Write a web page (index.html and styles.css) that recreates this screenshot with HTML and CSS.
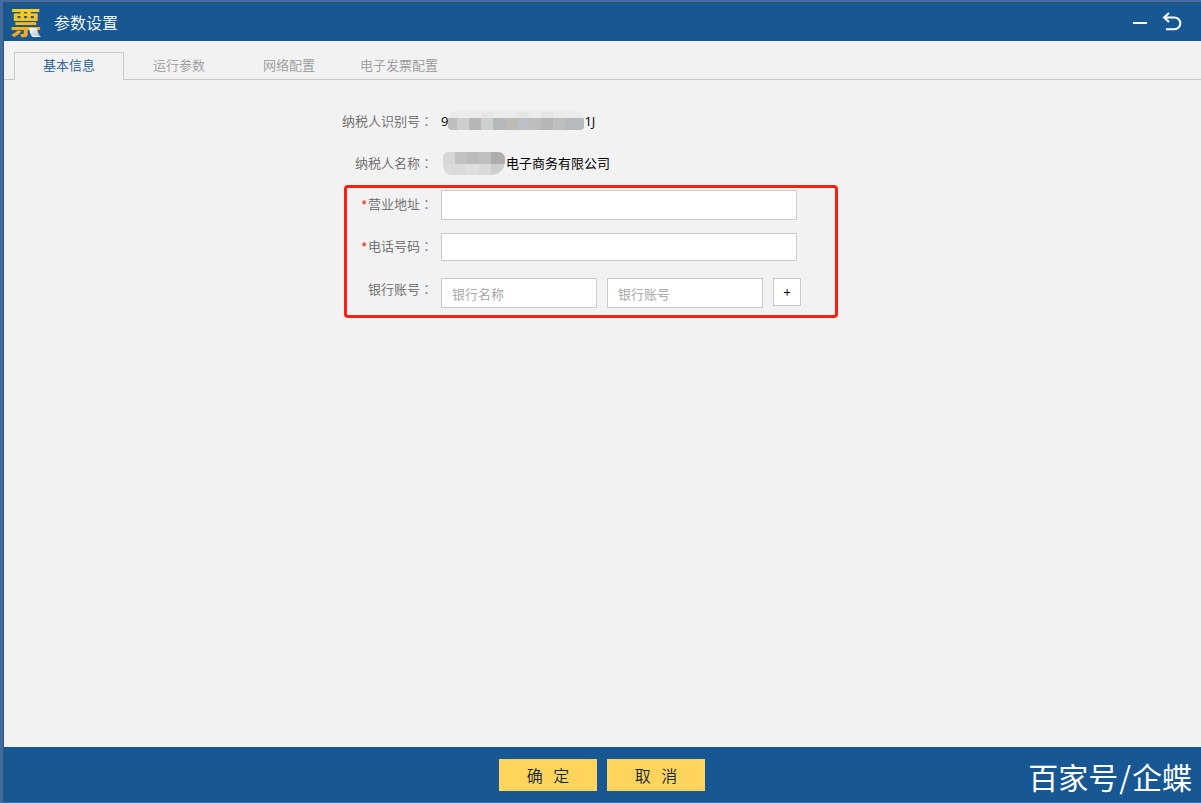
FILE: index.html
```html
<!DOCTYPE html>
<html lang="zh-CN">
<head>
<meta charset="utf-8">
<title>参数设置</title>
<link rel="stylesheet" href="styles.css">
</head>
<body>
<div class="window">
  <header class="titlebar">
    <svg class="logo" width="32" height="34" viewBox="0 0 32 34" aria-hidden="true">
      <defs>
        <linearGradient id="gold" x1="0" y1="0" x2="0" y2="1">
          <stop offset="0" stop-color="#ffdc1c"/>
          <stop offset="0.5" stop-color="#fdc21c"/>
          <stop offset="1" stop-color="#f49a14"/>
        </linearGradient>
        <linearGradient id="paper" x1="0" y1="0" x2="1" y2="1">
          <stop offset="0" stop-color="#ffffff"/>
          <stop offset="1" stop-color="#a9b4c4"/>
        </linearGradient>
      </defs>
      <text class="logo-text" x="0" y="29">票</text>
      <path d="M19 23h8c1 4 1 6 4 9h-8c-3-2-3-5-4-9z" fill="url(#paper)"/>
      <path d="M21 30c3 1 7 0 10 2h-8z" fill="#edf1f6"/>
    </svg>
    <h1 class="title">参数设置</h1>
    <div class="window-actions">
      <button class="icon-button" type="button" aria-label="最小化">
        <svg width="14" height="20" viewBox="0 0 14 20"><path d="M0 11h14" stroke="#fff" stroke-width="2"/></svg>
      </button>
      <button class="icon-button" type="button" aria-label="返回">
        <svg width="20" height="20" viewBox="0 0 20 20" fill="none" stroke="#fff" stroke-width="2"><path d="M7 1L2 5.500l5 4.500M2 5.500h10.500a5.800 5.800 0 0 1 0 11.700H4"/></svg>
      </button>
    </div>
  </header>

  <nav class="tabs">
    <button class="tab tab-active" type="button">基本信息</button>
    <button class="tab" type="button">运行参数</button>
    <button class="tab" type="button">网络配置</button>
    <button class="tab" type="button">电子发票配置</button>
  </nav>

  <main class="content">
    <form class="form" id="settings">
      <div class="row">
        <span class="label">纳税人识别号<span class="colon" lang="zh-TW">：</span></span>
        <div class="value">9<svg class="mask" width="136" height="20" viewBox="0 0 136 20" aria-hidden="true">
          <clipPath id="id-clip"><path d="M8 0h120q8 0 8 8v7q0 4-4 4H4q-4 0-4-4V8q0-8 8-8z"/></clipPath>
          <g clip-path="url(#id-clip)">
            <path fill="#ebebeb" d="M0 0h137v7H0z"/>
            <path fill="#e5e6e6" d="M33 1h12v6H33zM69 1h12v6H69zM93 1h12v6H93z"/>
            <path fill="#bbbdbf" d="M0 7h9v13H0z"/><path fill="#cfcecd" d="M9 7h12v13H9z"/>
            <path fill="#b8b5b5" d="M21 7h12v13H21z"/><path fill="#cfcfd0" d="M33 7h12v13H33z"/>
            <path fill="#b5b8ba" d="M45 7h12v13H45z"/><path fill="#bdbbb3" d="M57 7h12v13H57z"/>
            <path fill="#bac0c6" d="M69 7h12v13H69z"/><path fill="#bdbdbd" d="M81 7h12v13H81z"/>
            <path fill="#b6b5b4" d="M93 7h12v13H93z"/><path fill="#bdbfbf" d="M105 7h12v13h-12z"/>
            <path fill="#b7babb" d="M117 7h20v13h-20z"/>
          </g>
        </svg>1J</div>
      </div>
      <div class="row">
        <span class="label">纳税人名称<span class="colon" lang="zh-TW">：</span></span>
        <div class="value"><svg class="mask" width="65" height="24" viewBox="0 0 65 24" aria-hidden="true">
          <clipPath id="name-clip"><path d="M8 1h49q6 0 7 6 1 17-16 17H13Q2 24 2 14V7q0-6 6-6z"/></clipPath>
          <g clip-path="url(#name-clip)">
            <path fill="#d5d6d7" d="M0 0h14v13H0z"/><path fill="#c2c2c3" d="M14 0h12v13H14z"/>
            <path fill="#bcbbbc" d="M26 0h12v13H26z"/><path fill="#c0c0c1" d="M38 0h12v13H38z"/>
            <path fill="#aeacad" d="M50 0h15v13H50z"/><path fill="#dadbdb" d="M0 13h26v11H0z"/>
            <path fill="#dfdfde" d="M26 13h12v11H26z"/><path fill="#d8d9d8" d="M38 13h12v11H38z"/>
            <path fill="#cccfd0" d="M50 13h15v11H50z"/>
          </g>
        </svg>电子商务有限公司</div>
      </div>
      <div class="highlight">
        <div class="row">
          <label class="label" for="address"><span class="required">*</span>营业地址<span class="colon" lang="zh-TW">：</span></label>
          <input class="input input-wide" id="address" type="text">
        </div>
        <div class="row">
          <label class="label" for="phone"><span class="required">*</span>电话号码<span class="colon" lang="zh-TW">：</span></label>
          <input class="input input-wide input-short" id="phone" type="text">
        </div>
        <div class="row">
          <label class="label" for="bank">银行账号<span class="colon" lang="zh-TW">：</span></label>
          <div class="bank">
            <input class="input" id="bank" type="text" placeholder="银行名称">
            <input class="input" type="text" placeholder="银行账号" aria-label="银行账号">
            <button class="add" type="button" aria-label="添加">+</button>
          </div>
        </div>
      </div>
    </form>
  </main>

  <footer class="footer">
    <button class="action" type="submit" form="settings">确&nbsp;&nbsp;&nbsp;定</button>
    <button class="action" type="button">取&nbsp;&nbsp;&nbsp;消</button>
    <span class="watermark">百家号<span class="slash">/</span>企蝶</span>
  </footer>
</div>
</body>
</html>
```
FILE: styles.css
```css
* { box-sizing: border-box; }

body {
  margin: 0;
  min-height: 100vh;
  padding: 2px 0 1px 3px;
  display: flex;
  background: #3a6ea5;
  font: 350 13px/20px "Noto Sans CJK SC", sans-serif;
  color: #000;
}

button, input { font: inherit; margin: 0; border-radius: 0; }
button { cursor: pointer; }

.window {
  flex: 1;
  display: flex;
  flex-direction: column;
  border: solid #454c56;
  border-width: 1px 0 0 1px;
  background: #f2f2f2;
}

.titlebar {
  display: flex;
  align-items: center;
  height: 38px;
  padding: 0 19px 0 6px;
  background: #175793;
}
.logo { flex: none; overflow: visible; }
.logo-text {
  font-size: 31px;
  font-weight: 700;
  fill: url(#gold);
}
.title {
  margin: 0 0 0 12px;
  font-size: 16px;
  font-weight: 350;
  line-height: 24px;
  color: #fff;
}
.window-actions { display: flex; gap: 15px; margin-left: auto; }
.icon-button { display: flex; padding: 0; border: 0; background: none; }

.tabs {
  display: flex;
  height: 39px;
  padding: 11px 0 0 10px;
  border-bottom: 1px solid #c9c9c9;
}
.tab {
  width: 110px;
  height: 28px;
  padding: 0 0 3px;
  border: 1px solid transparent;
  border-bottom: 0;
  background: none;
  color: #999;
}
.tab-active { border-color: #c9c9c9; background: #f2f2f2; color: #175793; }

.content { flex: 1; padding: 20px 0; }
.form { width: 523px; max-width: 100%; margin: 0 auto; }
.row {
  display: grid;
  grid-template-columns: 92px 1fr;
  column-gap: 8px;
  align-items: center;
  min-height: 42px;
}
.label { text-align: right; color: #666; white-space: nowrap; }
.colon { font-family: "Noto Sans CJK TC", sans-serif; }
.required { font-family: "Liberation Mono", monospace; color: #f00; }
.value {
  display: flex;
  align-items: center;
  font-family: "Open Sans", "Noto Sans CJK SC", sans-serif;
  font-weight: 400;
  white-space: nowrap;
}
.mask { flex: none; }

.highlight { position: relative; }
.highlight::after {
  content: "";
  position: absolute;
  inset: 1px 26px -8px 3px;
  border: 3px solid #ff1e12;
  border-radius: 4px;
  pointer-events: none;
}

.input {
  width: 156px;
  height: 30px;
  padding: 0 10px;
  border: 1px solid #c9c9c9;
  background: #fff;
}
.input::placeholder { color: #a0a0a0; opacity: 1; }
.input-wide { width: 356px; }
.input-short { height: 28px; }
.bank { display: flex; gap: 10px; align-items: flex-start; height: 30px; margin: 10px 0 2px; }
.row:last-child { align-items: start; }
.row:last-child > .label { padding-top: 11px; }
.add {
  width: 28px;
  height: 28px;
  padding: 0;
  border: 1px solid #c9c9c9;
  background: #fff;
  font-weight: 400;
}

.footer {
  position: relative;
  display: flex;
  justify-content: center;
  gap: 10px;
  height: 55px;
  padding: 12px 1px 0 0;
  background: #175793;
}
.action {
  width: 98px;
  height: 32px;
  padding: 0;
  border: 0;
  background: #ffd45c;
  color: #12283a;
  font-size: 16px;
}
.watermark {
  position: absolute;
  right: 9px;
  bottom: 6px;
  font-size: 30px;
  font-weight: 400;
  line-height: 40px;
  color: #fff;
}
.slash { padding: 0 1px; }
```
